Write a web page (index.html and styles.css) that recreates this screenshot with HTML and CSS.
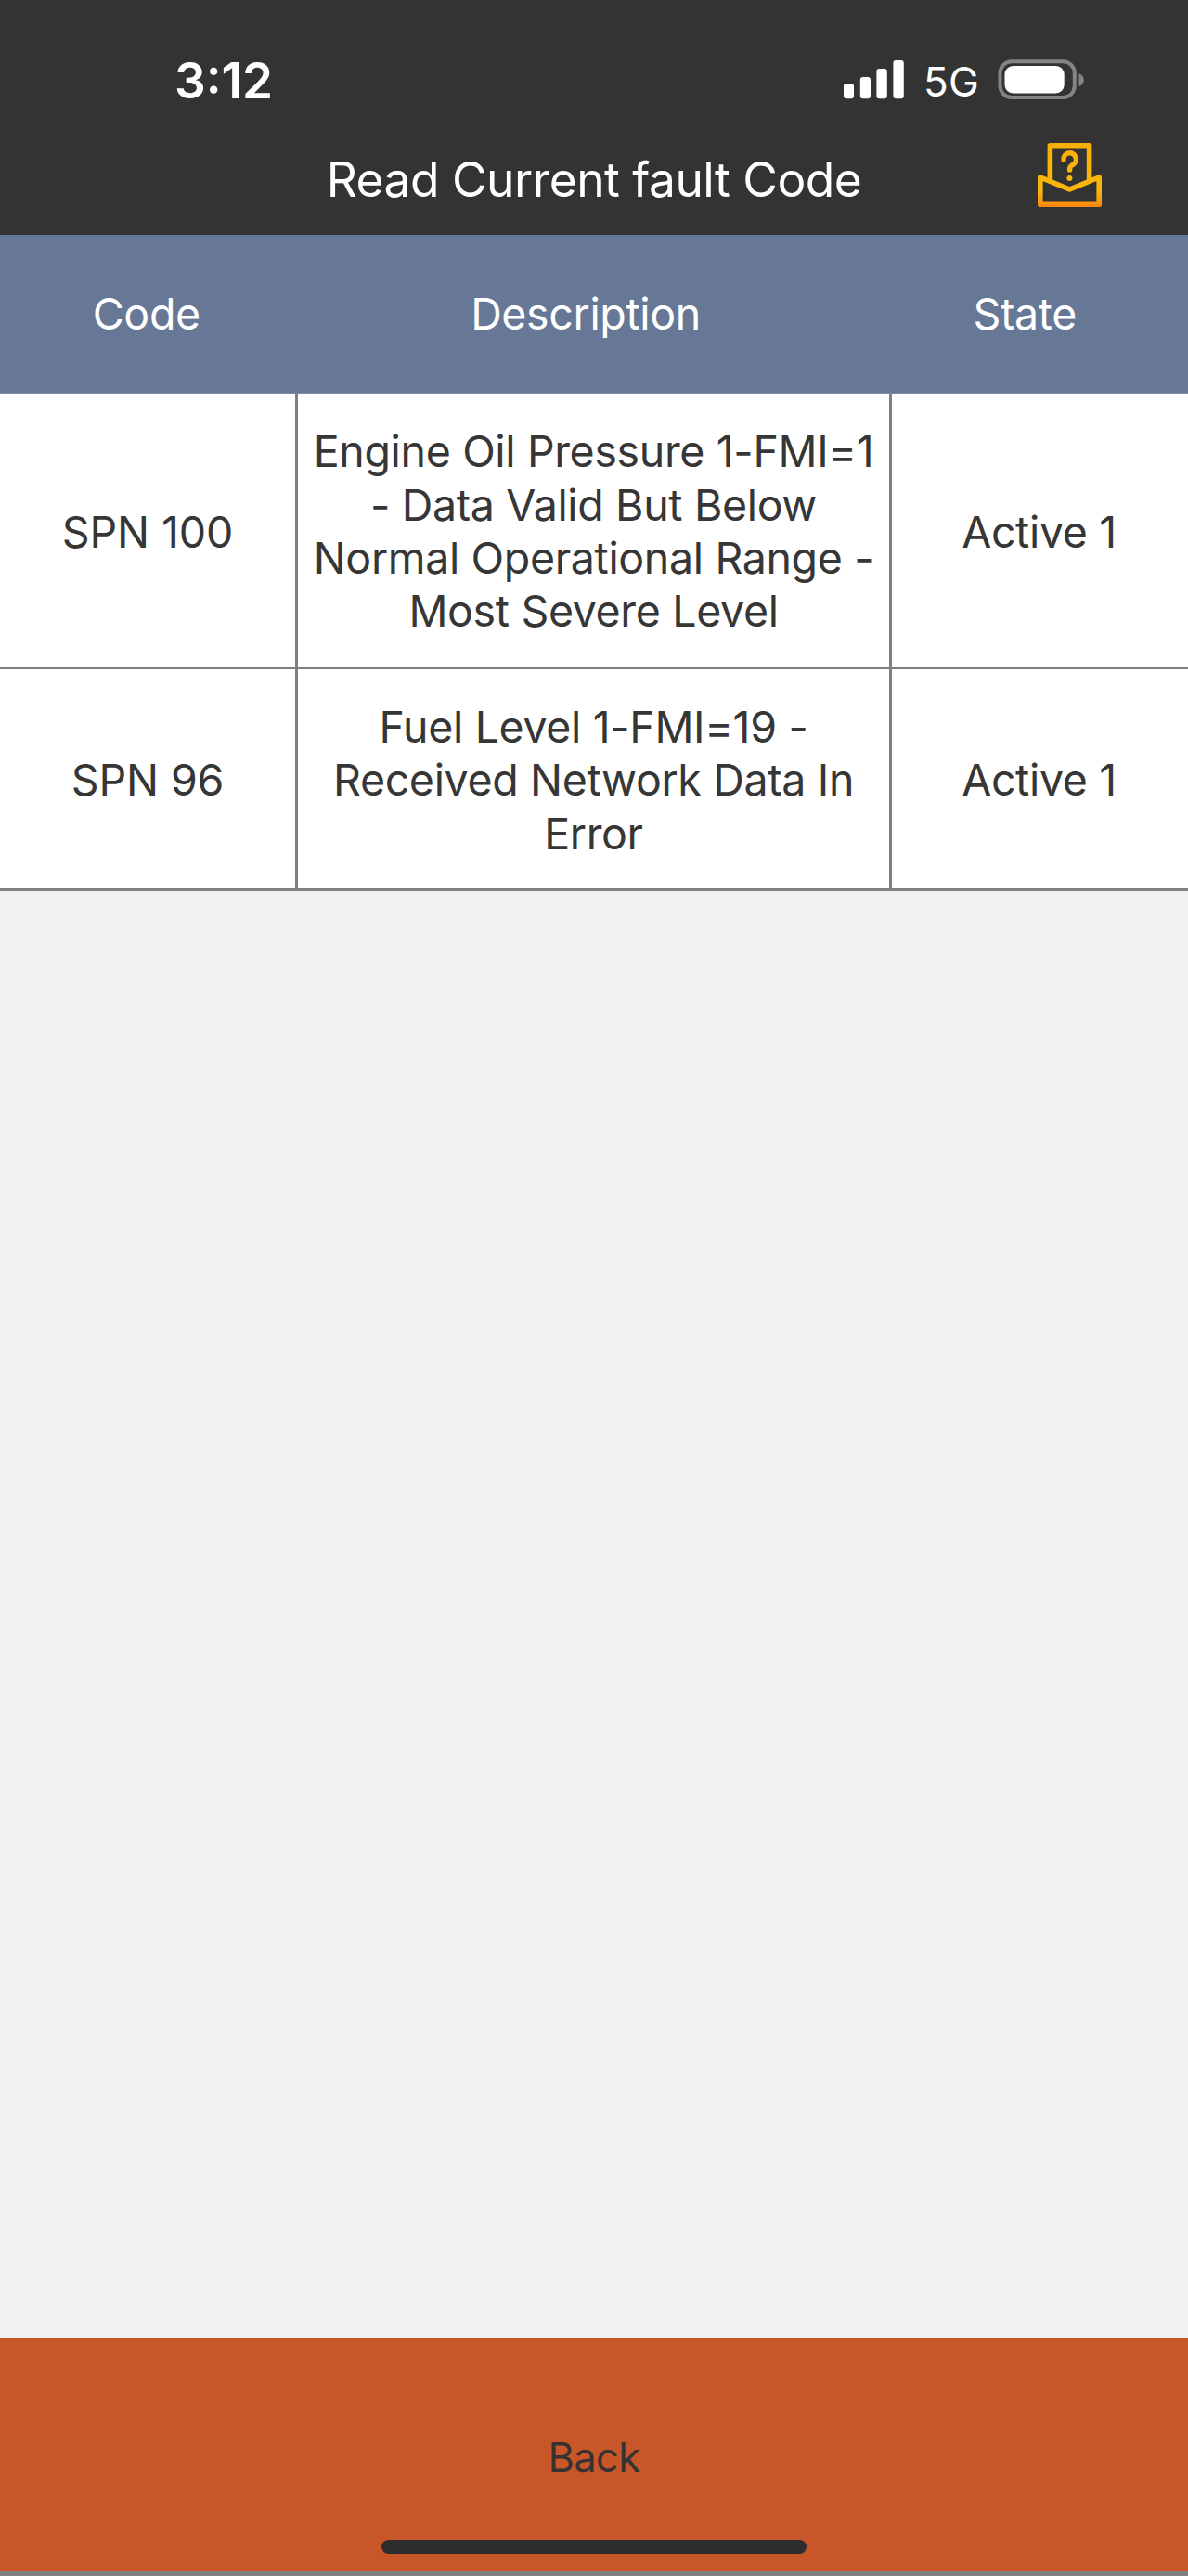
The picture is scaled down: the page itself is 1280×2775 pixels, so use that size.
FILE: index.html
```html
<!DOCTYPE html>
<html lang="en">
<head>
<meta charset="utf-8">
<title>Read Current fault Code</title>
<link rel="stylesheet" href="styles.css">
</head>
<body>
<div class="screen">
  <header class="top">
    <div class="status">
      <span class="time">3:12</span>
      <div class="indicators">
        <svg class="signal" width="65" height="43" viewBox="0 0 65 43" fill="#fff">
          <rect x="0" y="26" width="11" height="16.3" rx="3"/>
          <rect x="17.8" y="19" width="11.2" height="23.3" rx="3"/>
          <rect x="35.4" y="10" width="11.4" height="32.3" rx="3"/>
          <rect x="53.4" y="1" width="11.4" height="41.3" rx="3"/>
        </svg>
        <span class="network">5G</span>
        <svg class="battery" width="93" height="43" viewBox="0 0 93 43">
          <rect x="2.500" y="2.2" width="80.3" height="38.8" rx="12.5" fill="none" stroke="#848484" stroke-width="4"/>
          <rect x="7.500" y="7" width="64.2" height="29.4" rx="9" fill="#fff"/>
          <path d="M87.500 15.3c3.6 1.2 5.3 3.8 5.3 7s-1.7 5.800-5.300 7z" fill="#848484"/>
        </svg>
      </div>
    </div>
    <div class="nav">
      <h1 class="title">Read Current fault Code</h1>
      <svg class="help" width="69" height="69" viewBox="0 0 69 69" fill="none" stroke="url(#amber)" stroke-width="5.600" stroke-linejoin="round">
        <defs>
          <linearGradient id="amber" gradientUnits="userSpaceOnUse" x1="0" y1="0" x2="0" y2="69">
            <stop offset="0" stop-color="#f8b008"/>
            <stop offset=".75" stop-color="#fab60a"/>
            <stop offset="1" stop-color="#fb860c"/>
          </linearGradient>
        </defs>
        <path d="M13.400 41V2.800H55.600V41"/>
        <path d="M2.800 37L34.500 50L66.200 37V66.200H2.800Z"/>
        <path d="M28 18A6.700 6.700 0 1 1 37.700 23.500Q34.600 25.300 34.600 28V29" stroke-width="5.400" stroke-linecap="round"/>
        <circle cx="34.400" cy="38" r="3" fill="#fab60a" stroke="none"/>
      </svg>
    </div>
  </header>

  <main class="content">
    <div class="row head">
      <div class="cell">Code</div>
      <div class="cell">Description</div>
      <div class="cell">State</div>
    </div>
    <div class="row fault fault-tall">
      <div class="cell">SPN 100</div>
      <div class="cell">Engine Oil Pressure 1-FMI=1<br>- Data Valid But Below<br>Normal Operational Range -<br>Most Severe Level</div>
      <div class="cell">Active 1</div>
    </div>
    <div class="row fault">
      <div class="cell">SPN 96</div>
      <div class="cell">Fuel Level 1-FMI=19 -<br>Received Network Data In<br>Error</div>
      <div class="cell">Active 1</div>
    </div>
  </main>

  <footer class="footer">
    <button class="back" type="button">Back</button>
    <span class="home"></span>
  </footer>
</div>
</body>
</html>
```
FILE: styles.css
```css
* { box-sizing: border-box; }

body {
  margin: 0;
  font-family: Inter, "Liberation Sans", sans-serif;
  color: #363636;
}

.screen {
  display: flex;
  flex-direction: column;
  width: 1280px;
  height: 2775px;
  overflow: hidden;
  background: #f1f1f1;
}

.top {
  height: 253px;
  background: #333;
  color: #fff;
}

.status {
  display: flex;
  justify-content: space-between;
  align-items: flex-start;
  height: 134px;
  padding: 64px 112px 0 188px;
}

.time {
  padding-top: 2px;
  font-size: 53px;
  font-weight: 600;
  line-height: 43px;
  letter-spacing: 0;
}

.indicators {
  display: flex;
  align-items: flex-start;
}

.network {
  margin: 3px 20px 0 21px;
  font-size: 44px;
  line-height: 43px;
  letter-spacing: 0.2px;
}

.nav {
  display: grid;
  grid-template-columns: 1fr auto 1fr;
  height: 119px;
}

.title {
  grid-column: 2;
  margin: 0;
  font-size: 51.5px;
  font-weight: 400;
  line-height: 119px;
  letter-spacing: -0.53px;
  white-space: nowrap;
}

.help {
  justify-self: end;
  margin: 20px 93px 0 0;
}

.content {
  flex: 1;
  font-size: 46.5px;
  line-height: 57.33px;
  letter-spacing: -0.35px;
  text-align: center;
}

.row { display: grid; }

.cell {
  display: flex;
  align-items: center;
  justify-content: center;
  white-space: nowrap;
}

.head {
  grid-template-columns: 1fr 2fr 1fr;
  height: 171px;
  padding: 2px 18px 0 0;
  background: #667896;
  border-bottom: 1px solid #8488a0;
  color: #fff;
}

.fault {
  grid-template-columns: 321px 640px 319px;
  height: 239px;
  background: #fff;
  border-bottom: 3px solid #808080;
}

.fault-tall { height: 297px; }

.fault .cell {
  padding-top: 4px;
  border-right: 3px solid #808080;
}

.fault-tall .cell:not(:nth-child(2)) { padding-top: 6px; }

.fault .cell:first-child { letter-spacing: -0.1px; }

.fault .cell:last-child {
  padding-right: 2px;
  border-right: 0;
}

.footer {
  position: relative;
  height: 256px;
  background: #c95628;
  border-bottom: 5px solid #808080;
}

.back {
  width: 100%;
  height: 251px;
  padding: 5px 0 0;
  border: 0;
  background: none;
  color: #363230;
  font: 400 43.5px/52px Inter, "Liberation Sans", sans-serif;
  letter-spacing: -0.6px;
}

.home {
  position: absolute;
  left: 411px;
  bottom: 19px;
  width: 458px;
  height: 15px;
  border-radius: 8px;
  background: #2d2d2d;
}
```
